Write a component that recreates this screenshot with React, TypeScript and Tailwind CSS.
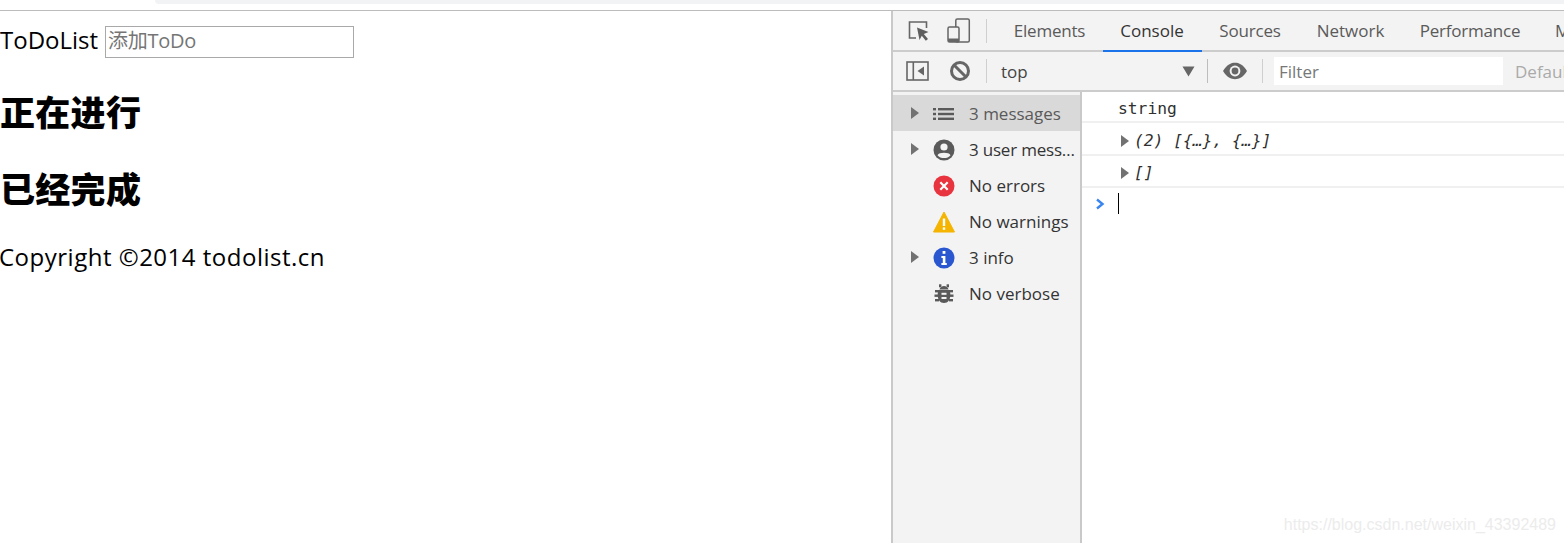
const UI = "font-['Open_Sans','Noto_Sans',sans-serif]";

function Tri({ className = "" }: { className?: string }) {
  return (
    <svg width="8" height="12" viewBox="0 0 8 12" className={className}>
      <path d="M0 0 L8 6 L0 12 Z" fill="#727272" />
    </svg>
  );
}

function Sep({ h = "h-6", c = "bg-[#cfcfcf]" }: { h?: string; c?: string }) {
  return <div className={`w-px ${h} ${c} shrink-0`} />;
}

function ListIcon() {
  return (
    <svg width="22" height="14" viewBox="0 0 22 14">
      <g fill="#5a5a5a">
        <rect x="0" y="1" width="3" height="2.4" />
        <rect x="5" y="1" width="16" height="2.4" />
        <rect x="0" y="5.8" width="3" height="2.4" />
        <rect x="5" y="5.8" width="16" height="2.4" />
        <rect x="0" y="10.6" width="3" height="2.4" />
        <rect x="5" y="10.6" width="16" height="2.4" />
      </g>
    </svg>
  );
}

function UserIcon() {
  return (
    <svg width="22" height="22" viewBox="0 0 22 22">
      <circle cx="11" cy="11" r="10.5" fill="#5a5a5a" />
      <circle cx="11" cy="8" r="3.6" fill="#f3f3f3" />
      <path d="M4.5 16.2 C6 13 16 13 17.5 16.2 C16 18.2 13.5 19 11 19 C8.5 19 6 18.2 4.5 16.2 Z" fill="#f3f3f3" />
    </svg>
  );
}

function ErrorIcon() {
  return (
    <svg width="22" height="22" viewBox="0 0 22 22">
      <circle cx="11" cy="11" r="10.5" fill="#e8343f" />
      <path d="M7.3 7.3 L14.7 14.7 M14.7 7.3 L7.3 14.7" stroke="#fff" strokeWidth="2.2" />
    </svg>
  );
}

function WarnIcon() {
  return (
    <svg width="22" height="22" viewBox="0 0 22 22">
      <path d="M11 1 L21.5 21 L0.5 21 Z" fill="#f4b400" stroke="#f4b400" strokeLinejoin="round" />
      <rect x="9.8" y="7.5" width="2.4" height="7.5" fill="#fff" />
      <rect x="9.8" y="16.4" width="2.4" height="2.4" fill="#fff" />
    </svg>
  );
}

function InfoIcon() {
  return (
    <svg width="22" height="22" viewBox="0 0 22 22">
      <circle cx="11" cy="11" r="10.5" fill="#2a56d0" />
      <rect x="9.6" y="4" width="2.8" height="2.8" fill="#fff" />
      <path d="M8.4 9 H12.4 V16 H13.8 V18 H8.4 V16 H9.8 V11 H8.4 Z" fill="#fff" />
    </svg>
  );
}

function BugIcon() {
  return (
    <svg width="20" height="20" viewBox="0 0 20 20">
      <g fill="#5a5a5a">
        <path d="M4.5 6 H15.5 C16 7.5 16.3 9 16.3 11 C16.3 15.5 14 19 10 19 C6 19 3.7 15.5 3.7 11 C3.7 9 4 7.5 4.5 6 Z" />
        <path d="M5.5 5.5 C6 3.2 8 2 10 2 C12 2 14 3.2 14.5 5.5 Z" />
        <rect x="1" y="6" width="4" height="2.4" />
        <rect x="15" y="6" width="4" height="2.4" />
        <rect x="0.5" y="10.5" width="4" height="2.4" />
        <rect x="15.5" y="10.5" width="4" height="2.4" />
        <rect x="1" y="15" width="4" height="2.4" />
        <rect x="15" y="15" width="4" height="2.4" />
        <rect x="5" y="0.3" width="2.4" height="3" />
        <rect x="12.6" y="0.3" width="2.4" height="3" />
      </g>
      <rect x="7.5" y="8.8" width="5" height="2" fill="#f3f3f3" />
      <rect x="7.5" y="13" width="5" height="2" fill="#f3f3f3" />
    </svg>
  );
}

const rows = [
  { icon: <ListIcon />, label: "3 messages", arrow: true, selected: true },
  { icon: <UserIcon />, label: "3 user mess…", arrow: true, tight: true },
  { icon: <ErrorIcon />, label: "No errors" },
  { icon: <WarnIcon />, label: "No warnings" },
  { icon: <InfoIcon />, label: "3 info", arrow: true },
  { icon: <BugIcon />, label: "No verbose" },
];

export default function App() {
  return (
    <div className={`w-[1564px] h-[543px] overflow-hidden bg-white flex flex-col ${UI}`}>
      <div className="h-[11px] shrink-0 border-b border-[#bcbcbc] flex">
        <div className="ml-[155px] flex-1 h-1 bg-[#f1f3f4] rounded-bl-md" />
      </div>
      <div className="flex-1 flex min-h-0">
        <main className="w-[891px] shrink-0 text-black font-['Open_Sans','Noto_Sans_CJK_SC',sans-serif]">
          <div className="h-[48px] pt-[15px] flex items-start">
            <span className="text-[24px] leading-[29px] mr-[7px] -mt-[1px]">ToDoList</span>
            <input
              placeholder="添加ToDo"
              className="w-[249px] h-[32px] border border-[#a9a9a9] px-[2px] pb-[4px] text-[20px] placeholder:text-[#757575] outline-none font-['Open_Sans','Noto_Sans_CJK_SC',sans-serif] tracking-[-0.3px]"
            />
          </div>
          <h2 className="mt-[30px] text-[35px] leading-[44px] tracking-[0.3px] font-black font-['Noto_Sans_CJK_SC',sans-serif]">正在进行</h2>
          <h2 className="mt-[33px] text-[35px] leading-[44px] tracking-[0.3px] font-black font-['Noto_Sans_CJK_SC',sans-serif]">已经完成</h2>
          <p className="mt-[32px] text-[24px] leading-[30px] tracking-[0.5px] -ml-[1px] whitespace-nowrap">Copyright ©2014 todolist.cn</p>
        </main>

        <section className="flex-1 min-w-0 border-l-2 border-[#c9c9c9] flex flex-col text-[#333]">
          <div className="h-[41px] shrink-0 bg-[#f3f3f3] border-b-2 border-[#cccccc] flex items-center">
            <div className="w-[104px] shrink-0 flex items-center pl-[14px]">
              <svg width="24" height="24" viewBox="0 0 24 24" className="shrink-0">
                <path d="M9 19 H2.5 V3 H19.5 V9" fill="none" stroke="#666" strokeWidth="1.6" />
                <path d="M10 8.5 L21.5 13 L16.8 15 L21 20 L18.8 21.8 L14.8 16.8 L12.5 21 Z" fill="#5f5f5f" />
              </svg>
              <svg width="24" height="26" viewBox="0 0 24 26" className="ml-[16px] shrink-0">
                <rect x="8.8" y="1" width="13.5" height="23" rx="1.5" fill="none" stroke="#666" strokeWidth="1.5" />
                <rect x="1" y="9" width="11" height="15" rx="1.5" fill="#f3f3f3" stroke="#666" strokeWidth="1.5" />
                <rect x="1" y="20.5" width="11" height="3.5" fill="#666" />
              </svg>
              <div className="ml-[15px]"><Sep /></div>
            </div>
            <div className="flex h-full text-[17px] text-[#5a5a5a] tracking-[-0.2px] whitespace-nowrap">
              <div className="w-[106px] flex items-center justify-center pt-[1px] pr-[1px]">Elements</div>
              <div className="w-[99px] flex items-center justify-center text-[#333] tracking-[0px] border-b-2 border-[#1a73e8] h-[41px] pt-[1px] pr-[1px]">Console</div>
              <div className="w-[97px] flex items-center justify-center pt-[1px] pr-[1px]">Sources</div>
              <div className="w-[103px] flex items-center justify-center tracking-[0px] pt-[1px]">Network</div>
              <div className="w-[136px] flex items-center justify-center pt-[1px]">Performance</div>
              <div className="ml-[17px] flex items-center pt-[1px]">Memory</div>
            </div>
          </div>

          <div className="h-[40px] shrink-0 bg-[#f3f3f3] border-b-2 border-[#cccccc] flex items-center">
            <div className="pl-[13px] shrink-0">
              <svg width="24" height="20" viewBox="0 0 24 20" className="block">
                <rect x="1" y="1" width="21" height="18" fill="none" stroke="#666" strokeWidth="1.6" />
                <rect x="6.5" y="1" width="1.6" height="18" fill="#666" />
                <path d="M18 5.5 V14.5 L11.5 10 Z" fill="#666" />
              </svg>
            </div>
            <svg width="22" height="22" viewBox="0 0 22 22" className="ml-[19px] shrink-0">
              <circle cx="11" cy="11" r="8.5" fill="none" stroke="#666" strokeWidth="3" />
              <path d="M5 5 L17 17" stroke="#666" strokeWidth="3" />
            </svg>
            <div className="ml-[15px]"><Sep /></div>
            <span className="ml-[14px] text-[17px] text-[#444] w-[180px] shrink-0 pt-[1px]">top</span>
            <svg width="13" height="11" viewBox="0 0 13 11" className="shrink-0 ml-[1px]">
              <path d="M0.5 0.5 H12.5 L6.5 10.5 Z" fill="#666" />
            </svg>
            <div className="ml-[12px]"><Sep c="bg-[#bdbdbd]" /></div>
            <svg width="26" height="18" viewBox="0 0 26 18" className="ml-[14px] shrink-0">
              <path d="M1 9 C5 2.5 9 0.8 13 0.8 C17 0.8 21 2.5 25 9 C21 15.5 17 17.2 13 17.2 C9 17.2 5 15.5 1 9 Z" fill="#666" />
              <circle cx="13" cy="9" r="5.4" fill="#f3f3f3" />
              <circle cx="13" cy="9" r="3.4" fill="#666" />
            </svg>
            <div className="ml-[14px]"><Sep /></div>
            <div className="ml-[11px] w-[229px] h-[28px] shrink-0 bg-white flex items-center pl-[5px] pt-[1px] text-[17px] text-[#777]">Filter</div>
            <span className="ml-[12px] text-[17px] text-[#aaa] whitespace-nowrap pt-[1px]">Default levels</span>
          </div>

          <div className="flex-1 flex min-h-0">
            <aside className="w-[189px] shrink-0 bg-[#f3f3f3] border-r-2 border-[#c9c9c9] pt-[3px]">
              {rows.map((r) => (
                <div
                  key={r.label}
                  className={`h-[36px] flex items-center text-[17px] whitespace-nowrap ${r.selected ? "bg-[#d9d9d9] text-[#5a5a5a]" : "text-[#333]"} ${r.tight ? "tracking-[-0.2px]" : ""}`}
                >
                  <div className="w-[40px] shrink-0 pl-[18px]">{r.arrow ? <Tri className="block" /> : null}</div>
                  <div className="w-[22px] h-[22px] shrink-0 flex items-center justify-center mt-[1px]">{r.icon}</div>
                  <span className="ml-[14px] pt-[1px]">{r.label}</span>
                </div>
              ))}
            </aside>
            <div className="flex-1 min-w-0 relative bg-white font-['DejaVu_Sans_Mono','Liberation_Mono',monospace] text-[16.3px] text-[#303030]">
              <div className="h-[31px] border-b-2 border-[#f0f0f0] pl-[36px] flex items-center pt-[5px]">string</div>
              <div className="h-[33px] border-b-2 border-[#f0f0f0] pl-[39px] flex items-center italic pt-[4px]">
                <Tri className="mr-[5px]" />
                <span className="mt-[2px]">(2) [{"{…}"}, {"{…}"}]</span>
              </div>
              <div className="h-[32px] border-b-2 border-[#f0f0f0] pl-[39px] flex items-center italic pt-[4px]">
                <Tri className="mr-[5px]" />
                <span className="mt-[1px]">[]</span>
              </div>
              <div className="h-[29px] flex items-center pl-[13px] pt-[2px]">
                <svg width="10" height="12" viewBox="0 0 10 12">
                  <path d="M2 1.5 L7.5 6 L2 10.5" fill="none" stroke="#3a86f0" strokeWidth="2.4" />
                </svg>
                <div className="ml-[13px] w-px h-[21px] bg-black" />
              </div>
              <div className="absolute right-[8px] bottom-[6px] text-[16px] text-[#ececec] font-['Liberation_Sans',sans-serif]">https://blog.csdn.net/weixin_43392489</div>
            </div>
          </div>
        </section>
      </div>
    </div>
  );
}
